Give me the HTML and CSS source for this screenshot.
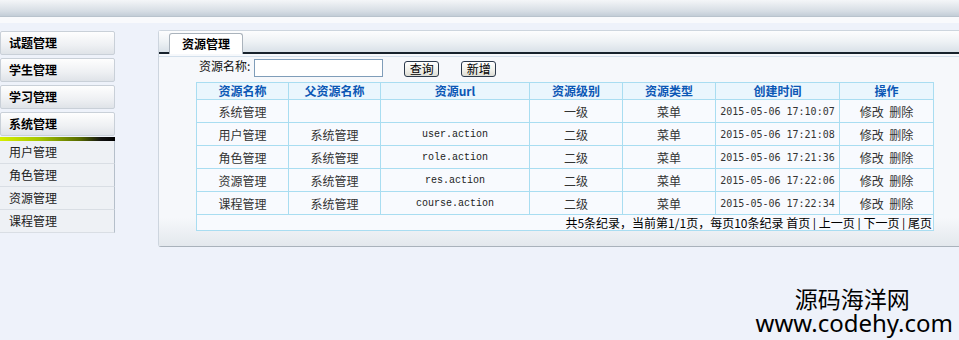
FILE: index.html
```html
<!DOCTYPE html>
<html lang="zh-CN">
<head>
  <meta charset="UTF-8" />
  <title>资源管理</title>
  <link rel="stylesheet" href="styles.css">
</head>
<body>

  <div class="topbar"></div>
  <div class="strip"></div>

  <div class="layout">
    <!-- left menu -->
    <div class="sidebar">
      <div class="menu-item">试题管理</div>
      <div class="menu-item">学生管理</div>
      <div class="menu-item">学习管理</div>
      <div class="menu-item open">系统管理</div>
      <div class="menu-line"></div>
      <ul class="submenu">
        <li>用户管理</li>
        <li>角色管理</li>
        <li>资源管理</li>
        <li>课程管理</li>
      </ul>
    </div>

    <!-- main panel -->
    <div class="panel">
      <div class="panel-head">
        <div class="tab">资源管理</div>
      </div>
      <div class="panel-body">
        <div class="search">
          <label>资源名称:</label>
          <input type="text" class="search-input">
          <button class="btn btn-query">查询</button>
          <button class="btn btn-add">新增</button>
        </div>
        <table class="grid">
          <colgroup>
            <col style="width:92px"><col style="width:92px"><col style="width:149px">
            <col style="width:93px"><col style="width:93px"><col style="width:124px"><col style="width:94px">
          </colgroup>
          <thead>
            <tr>
              <th>资源名称</th><th>父资源名称</th><th>资源url</th><th>资源级别</th>
              <th>资源类型</th><th>创建时间</th><th>操作</th>
            </tr>
          </thead>
          <tbody>
            <tr>
              <td>系统管理</td><td></td><td class="url"></td><td>一级</td>
              <td>菜单</td><td class="time">2015-05-06 17:10:07</td><td class="ops">修改 删除</td>
            </tr>
            <tr>
              <td>用户管理</td><td>系统管理</td><td class="url">user.action</td><td>二级</td>
              <td>菜单</td><td class="time">2015-05-06 17:21:08</td><td class="ops">修改 删除</td>
            </tr>
            <tr>
              <td>角色管理</td><td>系统管理</td><td class="url">role.action</td><td>二级</td>
              <td>菜单</td><td class="time">2015-05-06 17:21:36</td><td class="ops">修改 删除</td>
            </tr>
            <tr>
              <td>资源管理</td><td>系统管理</td><td class="url">res.action</td><td>二级</td>
              <td>菜单</td><td class="time">2015-05-06 17:22:06</td><td class="ops">修改 删除</td>
            </tr>
            <tr>
              <td>课程管理</td><td>系统管理</td><td class="url">course.action</td><td>二级</td>
              <td>菜单</td><td class="time">2015-05-06 17:22:34</td><td class="ops">修改 删除</td>
            </tr>
            <tr class="pager">
              <td colspan="7">共5条纪录，当前第1/1页，每页10条纪录 首页 | 上一页 | 下一页 | 尾页</td>
            </tr>
          </tbody>
        </table>
      </div>
    </div>
  </div>

  <div class="watermark">
    <div class="wm-cn">源码海洋网</div>
    <div class="wm-url">www.codehy.com</div>
  </div>

</body>
</html>
```

FILE: styles.css
```css
body {
  margin: 0; width: 959px; height: 340px; overflow: hidden;
  background: #eef2fa;
  font-family: "Noto Sans CJK SC", "DejaVu Sans", sans-serif;
  font-size: 12px; color: #222;
  position: relative;
}

.topbar {
  height: 16px;
  background: linear-gradient(#f4f6f8, #d6dde4 70%, #c3cdd7);
  border-bottom: 1px solid #b9c3cd;
}
.strip { height: 6px; background: #f9fafc; }

.layout { display: flex; align-items: flex-start; padding-top: 7px; }

/* left menu */
.sidebar { width: 115px; margin-top: 1px; flex: none; }
.menu-item {
  box-sizing: border-box; height: 24px; line-height: 22px;
  margin-bottom: 3px; padding-left: 8px;
  border: 1px solid #c9d0d8; border-radius: 2px;
  background: linear-gradient(#fefefe, #eef0f3 60%, #dfe3e8);
  font-weight: bold; color: #000;
}
.menu-item.open { margin-bottom: 1px; }
.menu-line {
  height: 4px;
  background: linear-gradient(to right, #d6ee00 0%, #a4c400 35%, #556800 70%, #111 88%, #000 100%);
}
.submenu { list-style: none; margin: 0; padding: 0; }
.submenu li {
  box-sizing: border-box; height: 23px; line-height: 22px;
  padding-left: 9px; color: #222;
  background: #eef1f5;
  border-bottom: 1px solid #d9dee4; border-right: 1px solid #b5bfca;
}

/* main panel */
.panel {
  flex: 1; margin-left: 43px;
  border: 1px solid #cdd5de; border-right: none; border-bottom-color: #a9b2bb;
  border-radius: 3px 0 0 3px;
  background: #f6f8fb;
}
.panel-head {
  display: flex; align-items: flex-end;
  height: 21px; padding-left: 10px;
  background: linear-gradient(#fdfdfe, #eef2f5 50%, #d9e1e8);
  border-bottom: 2px solid #17222c;
}
.tab {
  box-sizing: border-box; height: 21px; line-height: 20px;
  margin-bottom: -2px; padding: 0 12px;
  background: #fff; border: 1px solid #aab3bc; border-bottom: none;
  border-radius: 3px 3px 0 0;
  font-weight: bold; color: #000;
}
.panel-body {
  margin-top: 2px; border-top: 1px solid #d3e0ec;
  padding: 1px 0 15px 37px;
  background: linear-gradient(#f6f8fb 85%, #e3e8ed);
}

.search { display: flex; align-items: center; height: 19px; padding-left: 3px; }
.search label { color: #111; margin-top: -5px; }
.search-input {
  box-sizing: border-box; width: 129px; height: 18px; margin: 0 0 0 4px;
  border: 1px solid #7f9db9; background: #fff; padding: 0;
}
.btn {
  box-sizing: border-box; height: 16px; width: 35px; padding: 0;
  margin-top: 2px;
  border: 1px solid #2c3a4c; border-radius: 3px;
  background: linear-gradient(#ffffff, #f0f0ea 60%, #dcdcd4);
  font-family: "Noto Sans CJK SC", sans-serif; font-size: 12px; line-height: 13px; color: #000;
}
.btn-query { margin-left: 21px; }
.btn-add { margin-left: 22px; }

/* data table */
.grid {
  width: 738px; margin-top: 5px;
  border-collapse: collapse; table-layout: fixed;
  background: #f8fafe;
}
.grid th, .grid td {
  border: 1px solid #a9ddf1; padding: 0; text-align: center;
  white-space: nowrap; overflow: hidden;
}
.grid th {
  height: 16px; line-height: 16px;
  background: #eaf6fd; color: #0b57b5; font-weight: bold;
}
.grid td { height: 22px; color: #333; }
.grid td.url { font-family: "Liberation Mono", monospace; font-size: 10px; color: #222; }
.grid td.time { font-family: "DejaVu Sans Mono", monospace; font-size: 10px; color: #333; }
.grid td.ops { word-spacing: 3px; }
.grid tr.pager td {
  height: 15px; line-height: 15px; text-align: right; padding-right: 1px; color: #000;
}

/* watermark over the page */
.watermark {
  position: absolute; right: 6px; bottom: 4px;
  text-align: center; color: #000;
  font-family: "Noto Sans CJK SC", "Noto Sans", sans-serif;
}
.wm-cn { font-size: 23px; line-height: 23px; padding-right: 4px; margin-top: -2px; }
.wm-url { font-family: "Noto Sans", sans-serif; font-size: 24px; line-height: 26px; }
```
